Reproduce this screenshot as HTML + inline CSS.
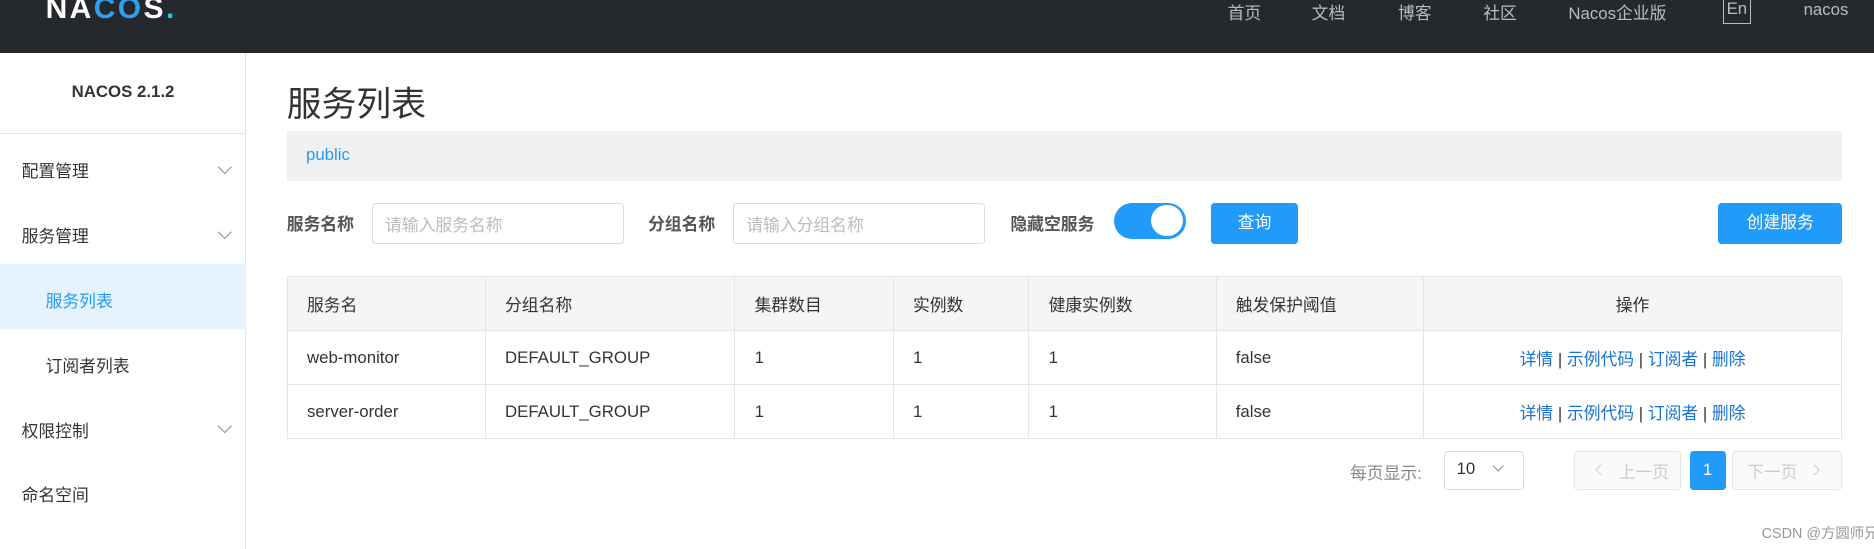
<!DOCTYPE html>
<html><head><meta charset="utf-8"><style>
*{box-sizing:border-box;margin:0;padding:0}
html,body{width:1874px;height:549px;overflow:hidden;background:#fff}
#w{zoom:1.2;width:1562px;height:458px;position:relative;font-family:"Liberation Sans","Noto Sans CJK SC",sans-serif;color:#333;font-size:14px}
.a{position:absolute;white-space:nowrap}
#hd{left:0;top:0;width:1562px;height:44px;background:#25292e}
.nav{color:#bbb;font-size:14px;top:0}
#sb{left:0;top:44px;width:205px;height:414px;border-right:1px solid #e6e6e6}
.mi{font-size:14px;color:#333}
.chev{width:8px;height:8px;border-right:1.3px solid #888;border-bottom:1.3px solid #888;transform:rotate(45deg)}
.inp{height:34px;border:1px solid #dcdcdc;border-radius:3px;color:#bbb;padding:7px 10px;font-size:14px}
.btn{background:#209bfa;color:#fff;border-radius:3px;text-align:center;height:34px;line-height:34px;font-size:14px}
.lb{font-weight:bold;color:#555;font-size:14px}
table{border-collapse:collapse;font-size:14px;table-layout:fixed}
td,th{border:1px solid #e6e6e6;text-align:left;padding-left:16px;font-weight:normal}
th{background:#f5f5f5;height:45px}
td{height:45px}
.lk{color:#1a73d0}
</style></head><body><div id="w">
<div class="a" id="hd"></div>
<div class="a" style="left:38px;top:-7px;font-size:25px;font-weight:bold;color:#fff;letter-spacing:2px">NA<span style="color:#2fa0f0">CO</span>S<span style="color:#1bc8e8">.</span></div>
<div class="a nav" style="left:1023px">首页</div>
<div class="a nav" style="left:1093px">文档</div>
<div class="a nav" style="left:1165px">博客</div>
<div class="a nav" style="left:1236px">社区</div>
<div class="a nav" style="left:1307px">Nacos企业版</div>
<div class="a nav" style="left:1436px;top:-3px;border:1px solid #bbb;padding:1px 2px;height:23px">En</div>
<div class="a nav" style="left:1503px">nacos</div>

<div class="a" id="sb"></div>
<div class="a" style="left:0;width:205px;top:68px;text-align:center;font-weight:bold;font-size:14px;color:#333">NACOS 2.1.2</div>
<div class="a" style="left:0;top:111px;width:205px;border-top:1px solid #e6e6e6"></div>
<div class="a mi" style="left:18px;top:132px">配置管理</div><div class="a chev" style="left:183px;top:135px"></div>
<div class="a mi" style="left:18px;top:186px">服务管理</div><div class="a chev" style="left:183px;top:189px"></div>
<div class="a" style="left:0;top:220px;width:205px;height:54px;background:#e5f3ff"></div>
<div class="a mi" style="left:38px;top:240px;color:#209bfa">服务列表</div>
<div class="a mi" style="left:38px;top:294px">订阅者列表</div>
<div class="a mi" style="left:18px;top:348px">权限控制</div><div class="a chev" style="left:183px;top:351px"></div>
<div class="a mi" style="left:18px;top:402px">命名空间</div>

<div class="a" style="left:239px;top:64px;font-size:29px;color:#333">服务列表</div>
<div class="a" style="left:239px;top:109px;width:1296px;height:42px;background:#f0f0f0;color:#209bfa;padding:12px 16px;font-size:14px">public</div>

<div class="a lb" style="left:239px;top:176px">服务名称</div>
<div class="a inp" style="left:310px;top:169px;width:210px">请输入服务名称</div>
<div class="a lb" style="left:540px;top:176px">分组名称</div>
<div class="a inp" style="left:611px;top:169px;width:210px">请输入分组名称</div>
<div class="a lb" style="left:842px;top:176px">隐藏空服务</div>
<div class="a" style="left:928px;top:169px;width:60px;height:30px;border-radius:15px;background:#209bfa"></div>
<div class="a" style="left:959px;top:171px;width:27px;height:26px;border-radius:13px;background:#fff"></div>
<div class="a btn" style="left:1009px;top:169px;width:73px">查询</div>
<div class="a btn" style="left:1432px;top:169px;width:103px">创建服务</div>

<table class="a" style="left:239px;top:230px;width:1296px">
<tr><th style="width:165px">服务名</th><th style="width:208px">分组名称</th><th style="width:132px">集群数目</th><th style="width:113px">实例数</th><th style="width:156px">健康实例数</th><th style="width:173px">触发保护阈值</th><th style="text-align:center;padding:0">操作</th></tr>
<tr><td>web-monitor</td><td>DEFAULT_GROUP</td><td>1</td><td>1</td><td>1</td><td>false</td><td style="text-align:center;padding:0"><span class="lk">详情</span> | <span class="lk">示例代码</span> | <span class="lk">订阅者</span> | <span class="lk">删除</span></td></tr>
<tr><td>server-order</td><td>DEFAULT_GROUP</td><td>1</td><td>1</td><td>1</td><td>false</td><td style="text-align:center;padding:0"><span class="lk">详情</span> | <span class="lk">示例代码</span> | <span class="lk">订阅者</span> | <span class="lk">删除</span></td></tr>
</table>

<div class="a" style="left:1125px;top:383px;color:#888">每页显示:</div>
<div class="a" style="left:1203px;top:376px;width:67px;height:32px;border:1px solid #dcdcdc;border-radius:3px;padding:6px 10px">10</div>
<div class="a chev" style="left:1245px;top:385px;width:7px;height:7px"></div>
<div class="a" style="left:1312px;top:376px;width:89px;height:32px;border:1px solid #e6e6e6;background:#fafafa;border-radius:3px;color:#ccc;padding:6px 0 0 36px">上一页</div>
<div class="a" style="left:1331px;top:388px;width:7px;height:7px;border-left:1.3px solid #ccc;border-bottom:1.3px solid #ccc;transform:rotate(45deg)"></div>
<div class="a btn" style="left:1408px;top:376px;width:30px;height:32px;line-height:32px">1</div>
<div class="a" style="left:1443px;top:376px;width:92px;height:32px;border:1px solid #e6e6e6;background:#fafafa;border-radius:3px;color:#ccc;padding:6px 0 0 12px">下一页</div>
<div class="a" style="left:1508px;top:388px;width:7px;height:7px;border-right:1.3px solid #ccc;border-top:1.3px solid #ccc;transform:rotate(45deg)"></div>
<div class="a" style="left:1468px;top:435px;color:#999;font-size:12px">CSDN @方圆师兄</div>
</div></body></html>
